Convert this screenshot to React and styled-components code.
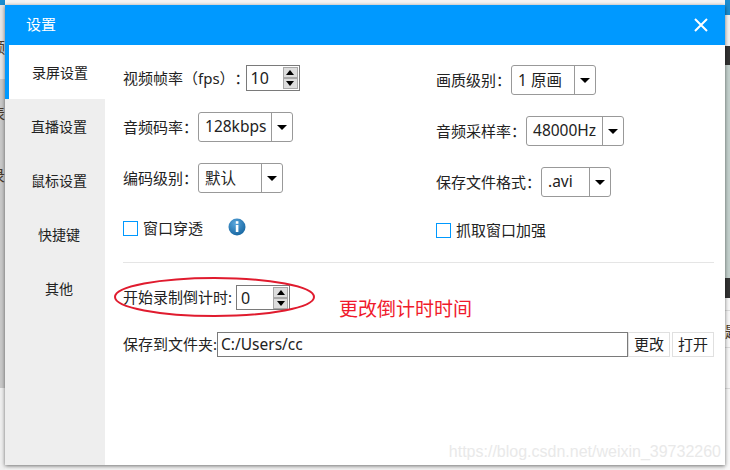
import styled, { createGlobalStyle } from "styled-components";

const GlobalStyle = createGlobalStyle`
  html, body {
    margin: 0;
    padding: 0;
    background: #fff;
  }
  * {
    box-sizing: border-box;
  }
`;

const Screen = styled.div`
  position: relative;
  width: 730px;
  height: 470px;
  overflow: hidden;
  display: flex;
  justify-content: space-between;
  background: #f4f4f4;
  font-family: "Noto Sans", "Noto Sans CJK SC", sans-serif;
  color: #222;
`;

const LeftStrip = styled.div`
  width: 5px;
  display: flex;
  flex-direction: column;
`;
const RightStrip = styled.div`
  width: 5px;
  display: flex;
  flex-direction: column;
`;
const Band = styled.div`
  height: ${(p) => p.$h}px;
  flex: ${(p) => (p.$fill ? 1 : "none")};
  background: ${(p) => p.$bg};
  border-bottom: ${(p) => (p.$line ? "1px solid #ddd" : "none")};
  display: flex;
  justify-content: flex-end;
  overflow: hidden;
  padding-top: ${(p) => p.$pad || 0}px;
  font-size: 15px;
  line-height: 18px;
  white-space: nowrap;
`;
const RightBand = styled(Band)`
  justify-content: flex-start;
`;
const Clip = styled.span`
  flex: none;
  color: #4a3a2a;
`;

const Dialog = styled.div`
  position: absolute;
  left: 5px;
  top: 5px;
  width: 720px;
  height: 460px;
  background: #fff;
  display: flex;
  flex-direction: column;
  box-shadow: 0 1px 4px rgba(0, 0, 0, 0.55);
`;

const TitleBar = styled.div`
  height: 40px;
  flex: none;
  background: #0099ff;
  color: #fff;
  display: flex;
  align-items: center;
  justify-content: space-between;
  padding: 0 17px 0 21px;
  font-size: 15px;
`;

const TitleText = styled.span`
  display: block;
  margin-top: -3px;
`;

const Close = styled.svg`
  width: 14px;
  height: 14px;
  display: block;
`;

const Main = styled.div`
  flex: 1;
  display: flex;
  min-height: 0;
`;

const Sidebar = styled.div`
  width: 100px;
  flex: none;
  background: #eeeeee;
  display: flex;
  flex-direction: column;
`;

const Tab = styled.div`
  height: 54px;
  display: flex;
  align-items: center;
  justify-content: center;
  font-size: 14px;
  background: ${(p) => (p.$active ? "#fff" : "transparent")};
  border-left: ${(p) => (p.$active ? "4px solid #0099ff" : "none")};
  padding-left: ${(p) => (p.$active ? "6px" : "8px")};
`;

const Content = styled.div`
  flex: 1;
  padding: 20px 11px 0 18px;
  display: flex;
  flex-direction: column;
  position: relative;
`;

const Columns = styled.div`
  display: grid;
  grid-template-columns: 313px 1fr;
`;

const Column = styled.div`
  display: flex;
  flex-direction: column;
  gap: 21px;
`;

const Row = styled.div`
  display: flex;
  align-items: center;
  height: ${(p) => p.$h || 30}px;
  margin-top: ${(p) => p.$mt || 0}px;
  font-size: 15px;
  white-space: nowrap;
`;

const Label = styled.span`
  display: block;
  padding-bottom: 2px;
  text-spacing-trim: space-all;
  margin-right: ${(p) => p.$mr || 0}px;
`;

const SpinBox = styled.div`
  width: ${(p) => p.$w}px;
  height: ${(p) => p.$h}px;
  flex: none;
  border: 1px solid #7a7a7a;
  display: flex;
  align-items: center;
  justify-content: space-between;
  padding: 0 1px 0 4px;
  font-size: 16px;
`;

const SpinButtons = styled.div`
  width: 15px;
  display: flex;
  flex-direction: column;
`;

const SpinButton = styled.div`
  height: 11px;
  background: #dddddd;
  border: 1px solid #a8a8a8;
  display: flex;
  align-items: center;
  justify-content: center;
  &::after {
    content: "";
    border-left: 4px solid transparent;
    border-right: 4px solid transparent;
    ${(p) => (p.$down ? "border-top" : "border-bottom")}: 5px solid #000;
  }
`;

const Select = styled.div`
  width: ${(p) => p.$w}px;
  height: 30px;
  border: 1px solid #999;
  border-radius: 3px;
  display: flex;
  align-items: center;
  font-size: 15.5px;
`;

const SelectValue = styled.div`
  flex: 1;
  padding-left: 6px;
  padding-bottom: 2px;
`;

const Caret = styled.div`
  width: 21px;
  height: 100%;
  flex: none;
  border-left: 1px solid #999;
  display: flex;
  align-items: center;
  justify-content: center;
  &::after {
    content: "";
    border-left: 5px solid transparent;
    border-right: 5px solid transparent;
    border-top: 5px solid #000;
  }
`;

const Check = styled.div`
  width: 15px;
  height: 15px;
  flex: none;
  border: 1px solid #0099ff;
  margin-right: 5px;
`;

const InfoIcon = styled.svg`
  width: 18px;
  height: 18px;
  margin-left: 25px;
  margin-top: -2px;
  display: block;
`;

const Divider = styled.div`
  height: 1px;
  background: #e5e5e5;
  margin-top: 24px;
`;

const CountRow = styled(Row)`
  height: 25px;
  margin-top: 22px;
`;

const PathRow = styled(Row)`
  height: 25px;
  margin-top: 22px;
`;

const PathInput = styled.div`
  flex: 1;
  height: 25px;
  border: 1px solid #7a7a7a;
  display: flex;
  align-items: center;
  padding: 0 0 1px 3px;
  font-size: 15.5px;
`;

const PlainButton = styled.div`
  width: 42px;
  height: 25px;
  border: 1px solid #e0e0e0;
  margin-left: ${(p) => p.$ml || 0}px;
  display: flex;
  align-items: center;
  justify-content: center;
  padding-bottom: 2px;
  font-size: 15px;
`;

const Ellipse = styled.svg`
  position: absolute;
  left: 9px;
  top: 232px;
  width: 201px;
  height: 40px;
`;

const Note = styled.div`
  position: absolute;
  left: 234px;
  top: 252px;
  font-size: 19px;
  line-height: 24px;
  color: #f01a2c;
  white-space: nowrap;
`;

const Watermark = styled.div`
  position: absolute;
  right: 4px;
  bottom: 4px;
  font-family: "Liberation Sans", sans-serif;
  font-size: 16px;
  line-height: 18px;
  color: #e9e9e9;
  white-space: nowrap;
`;

const Spinner = () => (
  <SpinButtons>
    <SpinButton />
    <SpinButton $down />
  </SpinButtons>
);

const Dropdown = ({ w, children }) => (
  <Select $w={w}>
    <SelectValue>{children}</SelectValue>
    <Caret />
  </Select>
);

const App = () => {
  return (
    <Screen>
      <GlobalStyle />
      <LeftStrip>
        <Band $h={5} $bg="#1a8ccf" />
        <Band $h={74} $bg="#e6e6e6" $pad={33}>
          <Clip>频</Clip>
        </Band>
        <Band $h={66} $bg="#c9c9c9" $pad={25}>
          <Clip>表</Clip>
        </Band>
        <Band $h={243} $bg="#c9c9c9" $pad={21}>
          <Clip>录</Clip>
        </Band>
        <Band $fill $bg="#f0f0f0" />
      </LeftStrip>
      <RightStrip>
        <RightBand $h={15} $bg="#1a8ccf" />
        <RightBand $h={31} $bg="#f2f2f2" />
        <RightBand $h={19} $bg="#333333" />
        <RightBand $h={213} $bg="#c4d1cd" />
        <RightBand $h={20} $bg="#333333" />
        <RightBand $h={13} $bg="#f8f8f8" $line />
        <RightBand $h={37} $bg="#f8f8f8" $line $pad={11}>
          <Clip>题</Clip>
        </RightBand>
        <RightBand $h={41} $bg="#f8f8f8" $line />
        <RightBand $fill $bg="#f8f8f8" />
      </RightStrip>

      <Dialog>
        <TitleBar>
          <TitleText>设置</TitleText>
          <Close viewBox="0 0 14 14">
            <path d="M1 1 L13 13 M13 1 L1 13" stroke="#fff" strokeWidth="2" fill="none" />
          </Close>
        </TitleBar>
        <Main>
          <Sidebar>
            <Tab $active>录屏设置</Tab>
            <Tab>直播设置</Tab>
            <Tab>鼠标设置</Tab>
            <Tab>快捷键</Tab>
            <Tab>其他</Tab>
          </Sidebar>
          <Content>
            <Columns>
              <Column>
                <Row $h={26}>
                  <Label $mr={-4}>视频帧率（fps）：</Label>
                  <SpinBox $w={54} $h={26}>
                    10
                    <Spinner />
                  </SpinBox>
                </Row>
                <Row>
                  <Label>音频码率：</Label>
                  <Dropdown w={95}>128kbps</Dropdown>
                </Row>
                <Row>
                  <Label>编码级别：</Label>
                  <Dropdown w={85}>默认</Dropdown>
                </Row>
                <Row $h={16} $mt={6}>
                  <Check />
                  <Label>窗口穿透</Label>
                  <InfoIcon viewBox="0 0 18 18">
                    <defs>
                      <radialGradient id="info" cx="40%" cy="30%" r="75%">
                        <stop offset="0" stopColor="#5aa6dc" />
                        <stop offset="1" stopColor="#14649f" />
                      </radialGradient>
                    </defs>
                    <circle cx="9" cy="9" r="8.5" fill="url(#info)" />
                    <rect x="7.8" y="3.2" width="2.6" height="2.6" fill="#fff" />
                    <rect x="7.8" y="7" width="2.6" height="7" fill="#fff" />
                  </InfoIcon>
                </Row>
              </Column>
              <Column>
                <Row>
                  <Label>画质级别：</Label>
                  <Dropdown w={85}>1 原画</Dropdown>
                </Row>
                <Row>
                  <Label>音频采样率：</Label>
                  <Dropdown w={98}>48000Hz</Dropdown>
                </Row>
                <Row>
                  <Label>保存文件格式：</Label>
                  <Dropdown w={70}>.avi</Dropdown>
                </Row>
                <Row $h={16} $mt={4}>
                  <Check />
                  <Label>抓取窗口加强</Label>
                </Row>
              </Column>
            </Columns>
            <Divider />
            <CountRow>
              <Label $mr={4}>开始录制倒计时:</Label>
              <SpinBox $w={54} $h={25}>
                0
                <Spinner />
              </SpinBox>
            </CountRow>
            <PathRow>
              <Label>保存到文件夹:</Label>
              <PathInput>C:/Users/cc</PathInput>
              <PlainButton>更改</PlainButton>
              <PlainButton $ml={2}>打开</PlainButton>
            </PathRow>
            <Ellipse viewBox="0 0 201 40">
              <ellipse cx="100.5" cy="20" rx="99.5" ry="19" fill="none" stroke="#e01b2e" strokeWidth="2" />
            </Ellipse>
            <Note>更改倒计时时间</Note>
          </Content>
        </Main>
        <Watermark>https://blog.csdn.net/weixin_39732260</Watermark>
      </Dialog>
    </Screen>
  );
};

export default App;
